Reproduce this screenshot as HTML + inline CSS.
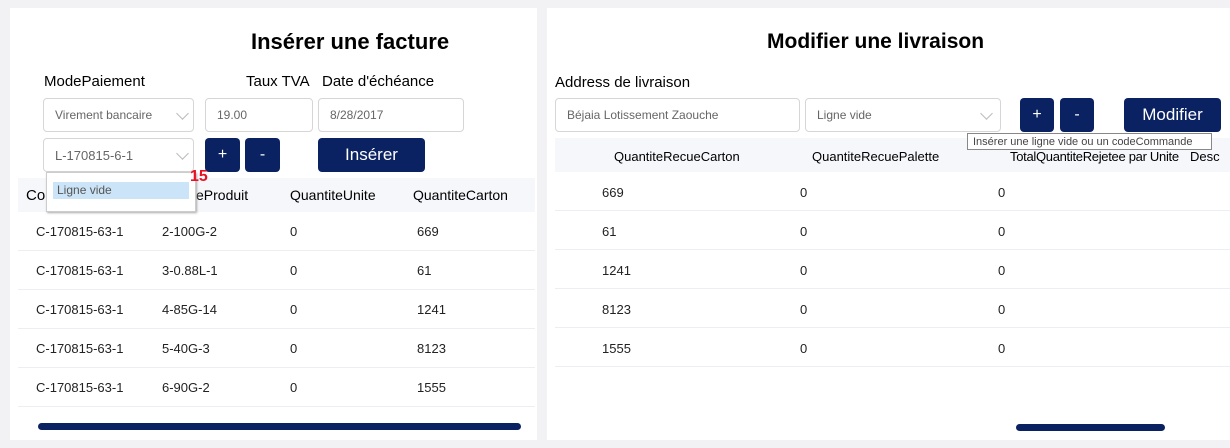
<!DOCTYPE html>
<html><head><meta charset="utf-8"><style>
body{margin:0;width:1230px;height:448px;background:#f2f2f5;font-family:"Liberation Sans",sans-serif;position:relative;overflow:hidden}
.p{position:absolute;background:#fff}
.a{position:absolute;white-space:nowrap}
.box{position:absolute;border:1px solid #d6d6d6;border-radius:4px;background:#fff;font-size:12px;color:#666;box-sizing:border-box;padding-left:11px;display:flex;align-items:center}
.btn{position:absolute;background:#0b2262;color:#fff;border-radius:4px;display:flex;align-items:center;justify-content:center}
.chev{position:absolute;width:8px;height:8px;border-right:1px solid #bbb;border-bottom:1px solid #bbb;transform:rotate(45deg)}
.hl{position:absolute;height:1px;background:#eceef2}
.cell{position:absolute;font-size:13px;color:#222}
</style></head><body>
<div class="p" style="left:10px;top:8px;width:527px;height:432px"></div>
<div class="p" style="left:547px;top:8px;width:683px;height:432px"></div>

<div class="a" style="left:251px;top:29px;font-size:22px;font-weight:bold">Insérer une facture</div>
<div class="a" style="left:44px;top:73px;font-size:15px">ModePaiement</div>
<div class="a" style="left:246px;top:73px;font-size:15px">Taux TVA</div>
<div class="a" style="left:322px;top:73px;font-size:15px">Date d'échéance</div>
<div class="box" style="left:43px;top:98px;width:151px;height:34px">Virement bancaire<div class="chev" style="left:134px;top:10px"></div></div>
<div class="box" style="left:205px;top:98px;width:108px;height:34px">19.00</div>
<div class="box" style="left:318px;top:98px;width:146px;height:34px">8/28/2017</div>
<div class="box" style="left:43px;top:138px;width:151px;height:34px;font-size:13px">L-170815-6-1<div class="chev" style="left:134px;top:10px"></div></div>
<div class="btn" style="left:205px;top:138px;width:35px;height:34px;font-size:16px">+</div>
<div class="btn" style="left:245px;top:138px;width:35px;height:34px;font-size:16px">-</div>
<div class="btn" style="left:318px;top:138px;width:107px;height:34px;font-size:17px">Insérer</div>

<div style="position:absolute;left:18px;top:178px;width:517px;height:34px;background:#f6f7fb"></div>
<div class="a" style="left:26px;top:187px;font-size:15px">Co</div>
<div class="a" style="left:196px;top:187px;font-size:14px">eProduit</div>
<div class="a" style="left:290px;top:187px;font-size:14px">QuantiteUnite</div>
<div class="a" style="left:413px;top:187px;font-size:14px">QuantiteCarton</div>
<div style="position:absolute;left:46px;top:172px;width:148px;height:38px;background:#fff;border:1px solid #ccc;box-shadow:1px 1px 2px #aaa"></div>
<div style="position:absolute;left:53px;top:182px;width:136px;height:17px;background:#cce4f7;font-size:12px;color:#555;padding-left:4px;box-sizing:border-box;line-height:17px">Ligne vide</div>
<div class="a" style="left:190px;top:168px;font-size:16px;font-weight:bold;color:#e81123">15</div>

<div id="L"></div>
<div style="position:absolute;left:38px;top:423px;width:483px;height:7px;border-radius:4px;background:#0b2262"></div>

<div class="a" style="left:767px;top:30px;font-size:21px;font-weight:bold">Modifier une livraison</div>
<div class="a" style="left:555px;top:74px;font-size:15px">Address de livraison</div>
<div class="box" style="left:555px;top:98px;width:245px;height:34px">Béjaia Lotissement Zaouche</div>
<div class="box" style="left:805px;top:98px;width:196px;height:34px">Ligne vide<div class="chev" style="left:176px;top:10px"></div></div>
<div class="btn" style="left:1020px;top:98px;width:34px;height:34px;font-size:16px">+</div>
<div class="btn" style="left:1060px;top:98px;width:34px;height:34px;font-size:16px">-</div>
<div class="btn" style="left:1124px;top:98px;width:97px;height:34px;font-size:17px">Modifier</div>
<div style="position:absolute;left:555px;top:138px;width:675px;height:34px;background:#f6f7fb"></div>
<div class="a" style="left:614px;top:149px;font-size:13px">QuantiteRecueCarton</div>
<div class="a" style="left:812px;top:149px;font-size:13px">QuantiteRecuePalette</div>
<div class="a" style="left:1010px;top:149px;font-size:13px;letter-spacing:-0.3px">TotalQuantiteRejetee par Unite</div>
<div class="a" style="left:1190px;top:149px;font-size:13px">Desc</div>
<div style="position:absolute;left:967px;top:133px;width:245px;height:17px;background:#fff;border:1px solid #888;font-size:11px;color:#444;line-height:16px;padding-left:5px;box-sizing:border-box">Insérer une ligne vide ou un codeCommande</div>
<div id="R"></div>
<div style="position:absolute;left:1016px;top:424px;width:149px;height:7px;border-radius:4px;background:#0b2262"></div>
<script>
var d=[["C-170815-63-1","2-100G-2","0","669"],["C-170815-63-1","3-0.88L-1","0","61"],["C-170815-63-1","4-85G-14","0","1241"],["C-170815-63-1","5-40G-3","0","8123"],["C-170815-63-1","6-90G-2","0","1555"]];
var h="",xs=[36,162,290,417];
d.forEach(function(r,i){var y=224+i*39;r.forEach(function(t,j){h+='<div class="cell" style="left:'+xs[j]+'px;top:'+y+'px">'+t+'</div>'});h+='<div class="hl" style="left:18px;width:517px;top:'+(250+i*39)+'px"></div>';
var y2=185+i*39;h+='<div class="cell" style="left:602px;top:'+y2+'px">'+r[3]+'</div><div class="cell" style="left:800px;top:'+y2+'px">0</div><div class="cell" style="left:998px;top:'+y2+'px">0</div><div class="hl" style="left:555px;width:675px;top:'+(210+i*39)+'px"></div>';});
document.getElementById("L").outerHTML=h;
</script>
</body></html>
